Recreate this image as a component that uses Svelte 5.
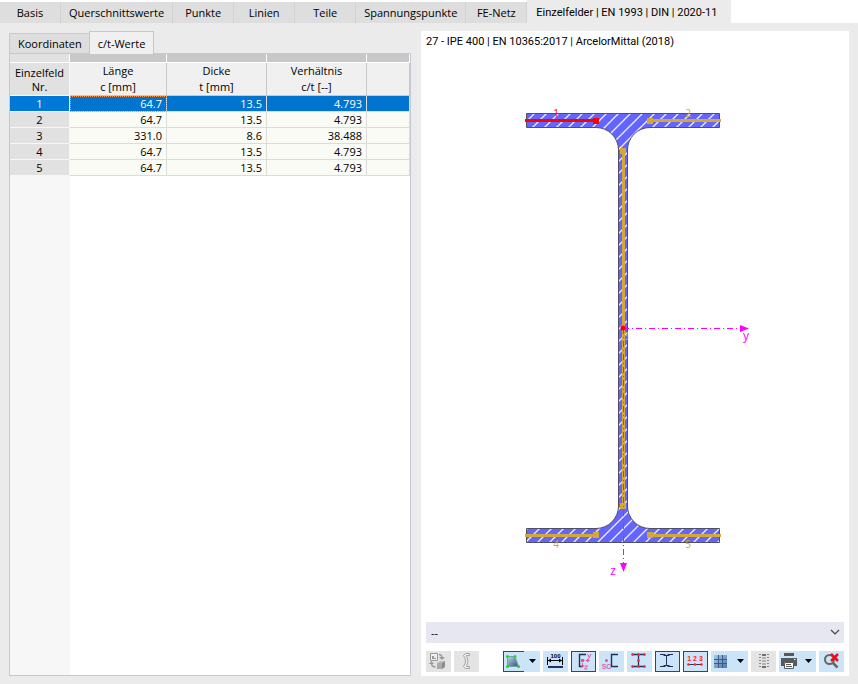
<script>
	const tabs = ['Basis', 'Querschnittswerte', 'Punkte', 'Linien', 'Teile', 'Spannungspunkte', 'FE-Netz', 'Einzelfelder | EN 1993 | DIN | 2020-11'];
	const rows = [
		[1, '64.7', '13.5', '4.793'],
		[2, '64.7', '13.5', '4.793'],
		[3, '331.0', '8.6', '38.488'],
		[4, '64.7', '13.5', '4.793'],
		[5, '64.7', '13.5', '4.793']
	];
	let activeTab = tabs.length - 1;
	let selected = 1;
	let view = '--';
</script>

<div class="window">
	<nav class="tabs">
		{#each tabs as tab, i}
			<button class="tab" class:active={i === activeTab} on:click={() => (activeTab = i)}>{tab}</button>
		{/each}
	</nav>

	<main>
		<section class="left">
			<div class="subtabs">
				<button class="subtab">Koordinaten</button>
				<button class="subtab current">c/t-Werte</button>
			</div>
			<div class="grid">
				<table>
					<colgroup>
						<col class="c0" /><col class="c1" /><col class="c2" /><col class="c2" /><col />
					</colgroup>
					<thead>
						<tr class="strip"><td></td><td></td><td></td><td></td><td></td></tr>
						<tr class="head">
							<th class="corner">Einzelfeld<br />Nr.</th>
							<th>Länge<br />c [mm]</th>
							<th>Dicke<br />t [mm]</th>
							<th>Verhältnis<br />c/t [--]</th>
							<th></th>
						</tr>
					</thead>
					<tbody>
						{#each rows as [nr, c, t, ratio]}
							<tr class:selected={selected === nr} on:click={() => (selected = nr)}>
								<th scope="row">{nr}</th>
								<td class="first">{c}</td>
								<td>{t}</td>
								<td>{ratio}</td>
								<td></td>
							</tr>
						{/each}
					</tbody>
				</table>
			</div>
		</section>

		<section class="right">
			<h1>27 - IPE 400 | EN 10365:2017 | ArcelorMittal (2018)</h1>

			<svg class="drawing" viewBox="426 51 418 571">
				<defs>
					<pattern id="hatch" width="12" height="12" patternUnits="userSpaceOnUse">
						<rect width="12" height="12" fill="#6464ff" />
						<path d="M-2 14L14 -2M-2 2L2 -2M10 14L14 10" stroke="#f0f0ff" stroke-width="1.3" />
					</pattern>
				</defs>
				<path fill="url(#hatch)" stroke="#50505c" d="M526.5 113.5H719.5V127.5H650A22.5 22.5 0 0 0 627.5 150V506A22.5 22.5 0 0 0 650 528.5H719.5V542.5H526.5V528.5H596A22.5 22.5 0 0 0 618.5 506V150A22.5 22.5 0 0 0 596 127.5H526.5Z" />

				<g class="gold">
					<path d="M650 120.5H721M623.5 150V506M525 535.5H596M650 535.5H721" />
					<path class="fill" d="M647 118h6v6h-6zM620 148h6v6h-6zM620 503h6v6h-6zM593 532h6v6h-6zM647 532h6v6h-6z" />
					<text x="688" y="117">2</text>
					<text x="626" y="340">3</text>
					<text x="556" y="548">4</text>
					<text x="688" y="548">5</text>
				</g>
				<g class="red">
					<path d="M525 120.5H596" />
					<path class="fill" d="M593 118h6v6h-6z" />
					<text x="556" y="117">1</text>
				</g>
				<g class="axis">
					<path d="M623 328.5H740M623.5 328V564" />
					<path class="fill" d="M740 325L749 328.5L740 332ZM620 563H627L623.5 572Z" />
					<text x="746" y="340">y</text>
					<text x="613" y="575">z</text>
				</g>
				<circle cx="623" cy="328" r="2.5" fill="#f00" />
			</svg>

			<div class="combo">
				<select aria-label="Ansicht" bind:value={view}>
					<option>--</option>
				</select>
				<svg viewBox="0 0 10 6"><path d="M1 1L5 5L9 1" fill="none" stroke="#444" stroke-width="1.2" /></svg>
			</div>

			<div class="toolbar">
				<button disabled aria-label="Kopieren">
					<svg viewBox="0 0 25 21">
						<path d="M4.500 2.500h7v7h-7z" fill="#eee" stroke="#999" />
						<path d="M6 8V5h2v2h2v1z" fill="#999" />
						<path d="M13 3.500q3 0 3 4M5.500 12q0 4 4 4" fill="none" stroke="#999" stroke-width="1.400" />
						<path d="M13 6h6l-3 3zM3 13l2.500-3l2.500 3z" fill="#999" />
						<path d="M11 12l3-2h5l-3 2z" fill="#bbb" />
						<path d="M11 12h5v6h-5z" fill="#aaa" />
						<path d="M16 12l3-2v6l-3 2z" fill="#8c8c8c" />
					</svg>
				</button>
				<button disabled aria-label="Profil">
					<svg viewBox="0 0 25 21">
						<path d="M15.500 2.500H11.500L9.500 4.500Q13.500 10 9.500 15.500L11.500 17.500H15.500V15.500H12.500Q15.500 10 12.500 4.500H15.500Z" fill="#eee" stroke="#a4a4a4" />
					</svg>
				</button>
				<span class="space"></span>
				<div class="split">
					<button class="checked" aria-label="Darstellung">
						<svg viewBox="0 0 21 21">
							<defs>
								<linearGradient id="shade" x2="1" y2="1"><stop stop-color="#b4dcf4" /><stop offset="1" stop-color="#30506c" /></linearGradient>
							</defs>
							<path d="M4.500 5.500h7.500l3.500 10h-11z" fill="url(#shade)" stroke="#7a9cb0" />
							<g fill="#2bd52b"><circle cx="4.500" cy="5.500" r="1.600" /><circle cx="12" cy="5.500" r="1.600" /><circle cx="4.500" cy="15.500" r="1.600" /><circle cx="15.500" cy="15.500" r="1.600" /></g>
						</svg>
					</button>
					<button class="arrow" aria-label="Darstellung wählen"><svg viewBox="0 0 16 21"><path d="M5 8h7l-3.500 4z" /></svg></button>
				</div>
				<button aria-label="Bemaßung">
					<svg viewBox="0 0 25 21">
						<text x="12.500" y="7" class="tiny">100</text>
						<path d="M4.500 6v8M19.500 6v8M5 9.500h14" stroke="#000" fill="none" />
						<path d="M5 9.500l3-2v4zM19 9.500l-3-2v4z" />
						<path d="M5 15h15v2h-15z" fill="#23305c" />
					</svg>
				</button>
				<button class="checked" aria-label="Hauptachsen">
					<svg viewBox="0 0 25 21">
						<path d="M15 3.500H8.500V15.500H11" fill="none" stroke="#23305c" stroke-width="1.400" />
						<path d="M11.500 9.500H18M11.500 9V15" fill="none" stroke="#e0559f" stroke-dasharray="2 1" />
						<path d="M10 8h3v3h-3zM16 7.500l3 2l-3 2zM9.500 14h4l-2 3z" fill="#e0559f" />
						<path d="M16.500 3l1.500 3M20 3l-2.500 5M13.500 15h3l-3 3h3" fill="none" stroke="#e0559f" />
					</svg>
				</button>
				<button aria-label="Schubmittelpunkt">
					<svg viewBox="0 0 25 21">
						<circle cx="7.500" cy="9.500" r="1.500" fill="#e0559f" />
						<text x="7.500" y="18" class="sc">SC</text>
						<path d="M19 3.500H12.500V15.500H19" fill="none" stroke="#23305c" stroke-width="1.400" />
					</svg>
				</button>
				<button aria-label="Punkte">
					<svg viewBox="0 0 25 21">
						<path d="M5 3.500H18M5 15.500H18M11.500 4V15" fill="none" stroke="#23305c" stroke-width="1.300" />
						<g fill="#f22"><circle cx="5.500" cy="3.500" r="1.300" /><circle cx="11.500" cy="3.500" r="1.300" /><circle cx="17.500" cy="3.500" r="1.300" /><circle cx="11.500" cy="9.500" r="1.300" /><circle cx="5.500" cy="15.500" r="1.300" /><circle cx="11.500" cy="15.500" r="1.300" /><circle cx="17.500" cy="15.500" r="1.300" /></g>
					</svg>
				</button>
				<button class="checked" aria-label="Teile">
					<svg viewBox="0 0 25 21">
						<path d="M5 3.500h5.500M12.500 3.500h5.500M5 15.500h5.500M12.500 15.500h5.500M8.500 4.500h6M8.500 14.500h6M11.500 4v11" fill="none" stroke="#23305c" />
					</svg>
				</button>
				<button class="checked" aria-label="Nummerierung">
					<svg viewBox="0 0 25 21">
						<text x="12" y="10" class="tiny nums">1 2 3</text>
						<path d="M5 13.500H19" stroke="#23305c" />
						<g fill="#f22"><circle cx="5.500" cy="13.500" r="1.300" /><circle cx="12" cy="13.500" r="1.300" /><circle cx="18.500" cy="13.500" r="1.300" /></g>
					</svg>
				</button>
				<div class="split">
					<button aria-label="Raster">
						<svg viewBox="0 0 21 21">
							<defs>
								<linearGradient id="cells" x2="1" y2="1"><stop stop-color="#a4cbe8" /><stop offset="1" stop-color="#4d78a8" /></linearGradient>
							</defs>
							<path d="M3 4h13v13h-13z" fill="url(#cells)" />
							<path d="M3 8.500h13M3 12.500h13M7.500 4v13M11.500 4v13" fill="none" stroke="#3d5a82" />
						</svg>
					</button>
					<button class="arrow" aria-label="Raster wählen"><svg viewBox="0 0 16 21"><path d="M5 8h7l-3.500 4z" /></svg></button>
				</div>
				<button disabled aria-label="Werte">
					<svg viewBox="0 0 25 21">
						<path d="M9 3v15M17 3v15" stroke="#888" stroke-width="2" stroke-dasharray="1 2" />
						<path d="M11 3h4v2h-4zM11 15h4v2h-4z" fill="#707070" />
						<path d="M11 6h4v2h-4zM11 9h4v2h-4zM11 12h4v2h-4z" fill="#b4b4b4" />
					</svg>
				</button>
				<div class="split">
					<button aria-label="Drucken">
						<svg viewBox="0 0 21 21">
							<path d="M5 2h10v3h-10zM2 7h16v8h-3v-4h-10v4h-3z" fill="#585858" />
							<path d="M5.500 11.500h9v6h-9z" fill="#fff" stroke="#585858" />
							<path d="M7 13.500h5M7 15.500h6" stroke="#585858" />
							<path d="M15 8h1.500v1h-1.500z" fill="#fff" />
						</svg>
					</button>
					<button class="arrow" aria-label="Drucken wählen"><svg viewBox="0 0 16 21"><path d="M5 8h7l-3.500 4z" /></svg></button>
				</div>
				<button aria-label="Zoom zurücksetzen">
					<svg viewBox="0 0 25 21">
						<circle cx="10.500" cy="8.500" r="4.500" fill="none" stroke="#666" stroke-width="2" />
						<path d="M14 12l4.500 4.500" stroke="#666" stroke-width="2.500" />
						<path d="M12 3l7 7M19 3l-7 7" stroke="#e8101c" stroke-width="2.500" />
					</svg>
				</button>
			</div>
		</section>
	</main>
</div>

<style>
	:global(body) {
		margin: 0;
	}
	.window {
		min-height: 100vh;
		display: flex;
		flex-direction: column;
		background: #ebebeb;
		font: 11px/16px "Open Sans", "Noto Sans", sans-serif;
		color: #000;
	}
	button {
		font: inherit;
		color: inherit;
		border: 0;
		padding: 0;
		margin: 0;
	}
	svg {
		display: block;
	}

	/* tabs */
	.tabs {
		display: flex;
		align-items: flex-end;
		background: #fff;
		height: 23px;
	}
	.tab {
		height: 21px;
		min-width: 61px;
		box-sizing: border-box;
		padding: 0 8px;
		background: #dedede;
		border-right: 1px solid #d2d2d2;
		white-space: nowrap;
	}
	.tab.active {
		height: 23px;
		padding: 3px 14px 0 9px;
		border: 0;
		background: #ebebeb;
		font-family: Roboto, "Open Sans", sans-serif;
	}
	main {
		flex: 1;
		display: grid;
		grid-template-columns: 402fr 428fr;
		gap: 10px;
		padding: 8px 9px;
	}
	.left, .right {
		display: flex;
		flex-direction: column;
		min-width: 0;
	}
	.subtabs {
		display: flex;
		align-items: flex-end;
		height: 22px;
	}
	.subtab {
		height: 20px;
		padding: 0 7px 0 8px;
		background: #dedede;
		border: 1px solid #c6c6d4;
		border-bottom: 0;
	}
	.subtab.current {
		height: 23px;
		margin: 0 0 -1px -1px;
		padding: 2px 8px 0;
		background: #f0f0f0;
		position: relative;
	}

	/* table */
	.grid {
		flex: 1;
		border: 1px solid #c6c6d4;
		background: linear-gradient(to right, #f7f7f7 60px, #fff 60px);
	}
	table {
		width: 100%;
		table-layout: fixed;
		border-collapse: separate;
		border-spacing: 0;
	}
	.c0 {
		width: 60px;
	}
	.c1 {
		width: 97px;
	}
	.c2 {
		width: 100px;
	}
	th, td {
		padding: 0;
		font-weight: normal;
		border-right: 1px solid #dcdcdc;
		border-bottom: 1px solid #dcdcdc;
	}
	.strip td {
		height: 8px;
		background: #c8c8c8;
		border-color: #fff;
	}
	.strip td:first-child {
		background: #e1e1e1;
	}
	.head th {
		height: 32px;
		background: #f0f0f0;
		border-color: #c8c8c8;
	}
	.head .corner {
		background: #e1e1e1;
		line-height: 14px;
		vertical-align: bottom;
		padding-bottom: 1px;
		height: 31px;
		border-color: #f7f7f7;
	}
	tbody th, tbody td {
		height: 15px;
		line-height: 15px;
	}
	tbody th {
		background: #e1e1e1;
		border-color: #f7f7f7;
	}
	tbody td {
		background: #fafbf4;
		text-align: right;
		padding-right: 4px;
	}
	.selected th {
		background: #0078d7;
		color: #fff;
	}
	.selected td {
		background: #0074cf;
		color: #fff;
	}
	.selected .first {
		outline: 1px dotted #ff9040;
		outline-offset: -1px;
	}

	/* preview */
	.right {
		background: #fff;
		padding: 0 5px 4px;
	}
	h1 {
		font: inherit;
		font-family: Roboto, "Open Sans", sans-serif;
		margin: 3px 0 1px;
	}
	.drawing {
		flex: 1 1 0;
		min-height: 0;
		width: 100%;
	}
	.drawing g path {
		fill: none;
		stroke-width: 3;
	}
	.drawing g path.fill {
		stroke: none;
	}
	.drawing text {
		font-size: 10px;
		text-anchor: middle;
	}
	.gold path {
		stroke: #d4a832;
	}
	.gold text, .drawing .gold path.fill {
		fill: #d4a832;
	}
	.red path {
		stroke: #f00;
	}
	.red text, .drawing .red path.fill {
		fill: #f00;
	}
	.drawing .axis path {
		stroke: #f0f;
		stroke-width: 1;
		stroke-dasharray: 6 3 1 3;
	}
	.axis text, .drawing .axis path.fill {
		fill: #f0f;
	}
	.drawing .axis text {
		font-size: 12px;
	}
	.combo {
		position: relative;
		height: 21px;
	}
	select {
		appearance: none;
		width: 100%;
		height: 100%;
		font: inherit;
		color: inherit;
		border: 0;
		border-radius: 0;
		padding: 0 20px 0 5px;
		background: #e7e7f1;
	}
	.combo svg {
		position: absolute;
		right: 4px;
		top: 7px;
		width: 10px;
		pointer-events: none;
	}
	.toolbar {
		display: flex;
		gap: 3px;
		margin-top: 8px;
	}
	.toolbar button {
		width: 25px;
		height: 21px;
		background: #cce4f7;
	}
	.toolbar button:disabled {
		background: #e4e4e4;
	}
	.toolbar svg {
		width: 100%;
		height: 21px;
	}
	.toolbar .checked {
		box-shadow: inset 0 0 0 1px #0054a0;
	}
	.split {
		display: flex;
	}
	.toolbar .split button {
		width: 21px;
	}
	.toolbar .split .arrow {
		width: 16px;
	}
	.toolbar .split .checked {
		box-shadow: inset 1px 1px #0054a0, inset 0 -1px #0054a0;
	}
	.space {
		width: 18px;
	}
	.tiny {
		font: bold 6px "Liberation Sans", sans-serif;
		text-anchor: middle;
	}
	.nums {
		font-size: 7px;
		fill: #f22;
	}
	.sc {
		font: bold 7px "Liberation Sans", sans-serif;
		text-anchor: middle;
		fill: #d86aa8;
	}
</style>
